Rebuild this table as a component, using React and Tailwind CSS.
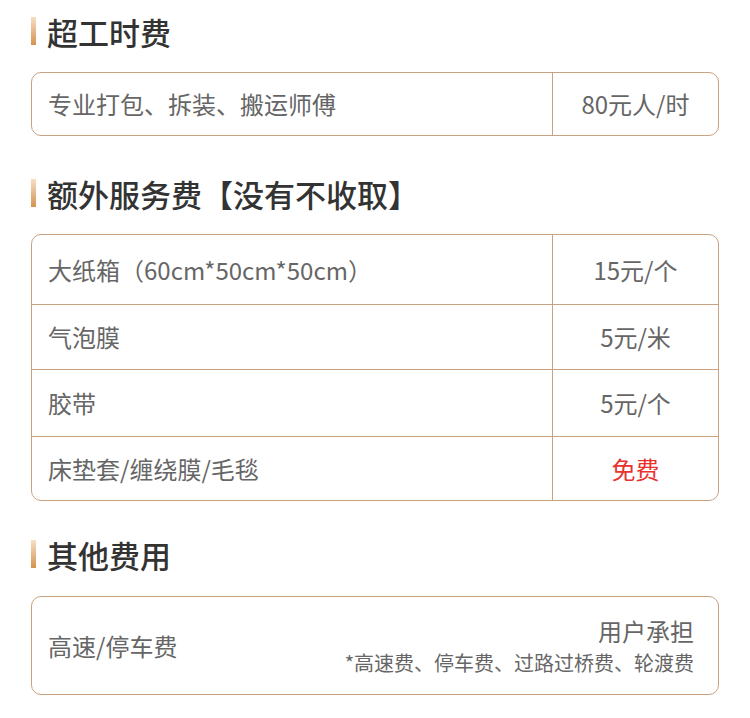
import React from 'react';

const font = { fontFamily: '"Noto Sans CJK SC", "Noto Sans", sans-serif' };

const SectionTitle = ({ children, className = '' }) => (
  <div className={`flex items-center h-[40px] ${className}`}>
    <span className="w-[5px] h-[28px] bg-gradient-to-b from-[#f6dfc4] to-[#d4934d]" />
    <h2 className="ml-[11px] text-[31px] font-medium text-[#333333] leading-none [text-spacing-trim:space-all]">{children}</h2>
  </div>
);

const extras = [
  { name: '大纸箱（60cm*50cm*50cm）', price: '15元/个', h: 'h-[69px]' },
  { name: '气泡膜', price: '5元/米', h: 'h-[65px]' },
  { name: '胶带', price: '5元/个', h: 'h-[67px]' },
  { name: '床垫套/缠绕膜/毛毯', price: '免费', h: 'h-[64px]', free: true },
];

const App = () => {
  return (
    <div className="w-[750px] min-h-[718px] bg-white px-[31px] pt-[11px]" style={font}>
      <SectionTitle>超工时费</SectionTitle>
      <div className="mt-[21px] h-[64px] flex border border-[#c9a27f] rounded-[10px] text-[24px] text-[#666666]">
        <div className="flex-1 flex items-center pl-[16px]">专业打包、拆装、搬运师傅</div>
        <div className="w-[166px] border-l border-[#c9a27f] flex items-center justify-center">80元人/时</div>
      </div>

      <SectionTitle className="mt-[37px]">额外服务费【没有不收取】</SectionTitle>
      <div className="mt-[21px] border border-[#c9a27f] rounded-[10px] text-[24px] text-[#666666]">
        {extras.map((row, i) => (
          <div key={i} className={`flex ${row.h} ${i > 0 ? 'border-t border-[#c9a27f]' : ''}`}>
            <div className="flex-1 flex items-center pl-[16px]">{row.name}</div>
            <div className={`w-[166px] border-l border-[#c9a27f] flex items-center justify-center ${row.free ? 'text-[#e8322e]' : ''}`}>
              {row.price}
            </div>
          </div>
        ))}
      </div>

      <SectionTitle className="mt-[33px]">其他费用</SectionTitle>
      <div className="mt-[22px] h-[99px] flex items-center justify-between border border-[#c9a27f] rounded-[10px] pl-[16px] pr-[24px] text-[#666666]">
        <div className="text-[24px]">高速/停车费</div>
        <div className="flex flex-col items-end">
          <div className="text-[24px] leading-[30px]">用户承担</div>
          <div className="text-[20px] leading-[26px] mt-[4px]">*高速费、停车费、过路过桥费、轮渡费</div>
        </div>
      </div>
    </div>
  );
};

export default App;
